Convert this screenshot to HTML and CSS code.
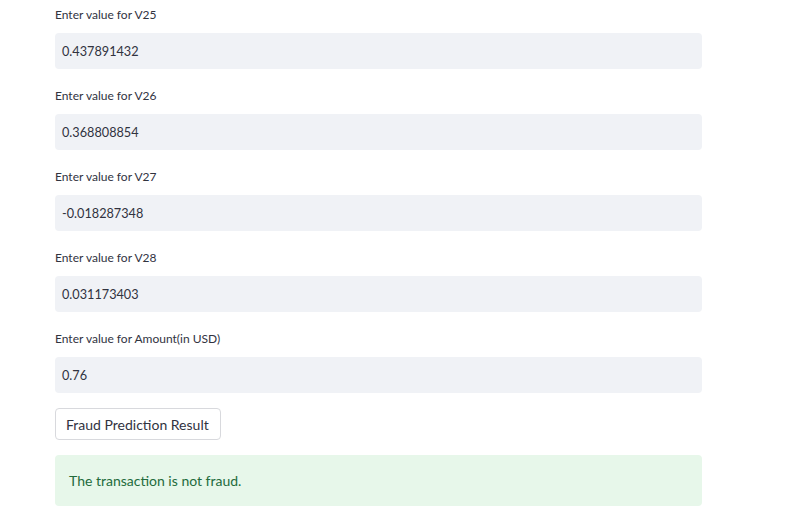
FILE: index.html
```html
<!DOCTYPE html>
<html>
<head>
<meta charset="utf-8">
<link rel="stylesheet" href="styles.css">
</head>
<body>
<main class="app">
  <div class="field">
    <label class="label">Enter value for V25</label>
    <div class="input">0.437891432</div>
  </div>
  <div class="field">
    <label class="label">Enter value for V26</label>
    <div class="input">0.368808854</div>
  </div>
  <div class="field">
    <label class="label">Enter value for V27</label>
    <div class="input">-0.018287348</div>
  </div>
  <div class="field">
    <label class="label">Enter value for V28</label>
    <div class="input">0.031173403</div>
  </div>
  <div class="field">
    <label class="label">Enter value for Amount(in USD)</label>
    <div class="input">0.76</div>
  </div>
  <button class="btn">Fraud Prediction Result</button>
  <div class="success">The transaction is not fraud.</div>
</main>
</body>
</html>
```
FILE: styles.css
```css
html, body {
  margin: 0;
  background: #ffffff;
}
body {
  font-family: "Source Sans Pro", Lato, "Noto Sans", sans-serif;
  color: #31333f;
}
.app {
  width: 647px;
  padding: 4px 0 0 55px;
}
.field {
  display: flex;
  flex-direction: column;
  margin-bottom: 16px;
}
.label {
  font-size: 12px;
  line-height: 20px;
  height: 20px;
  margin-top: 1px;
  margin-bottom: 8px;
  color: #31333f;
}
.input {
  height: 36px;
  box-sizing: border-box;
  background: #f0f2f6;
  border-radius: 4px;
  padding: 0 7px;
  display: flex;
  align-items: center;
  font-size: 12.7px;
  color: #31333f;
}
.btn {
  display: block;
  margin-top: -1px;
  height: 32px;
  box-sizing: border-box;
  padding: 0 11px 0 10px;
  background: #ffffff;
  border: 1px solid #d8d9dd;
  border-radius: 4px;
  font-family: inherit;
  font-size: 14px;
  color: #31333f;
}
.success {
  margin-top: 15px;
  height: 51px;
  box-sizing: border-box;
  background: #e7f7ea;
  border-radius: 4px;
  padding: 0 14px;
  display: flex;
  align-items: center;
  font-size: 14px;
  color: #236b3c;
}
```
